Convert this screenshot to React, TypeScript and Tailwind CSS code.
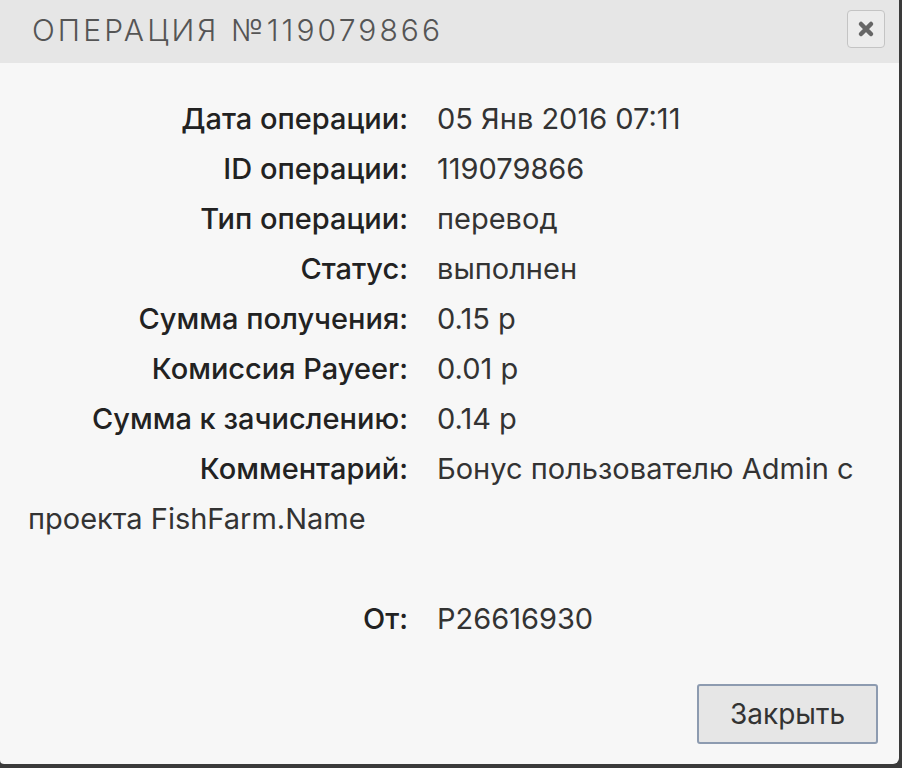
import React from "react";

const rows: [string, string][] = [
  ["Дата операции:", "05 Янв 2016 07:11"],
  ["ID операции:", "119079866"],
  ["Тип операции:", "перевод"],
  ["Статус:", "выполнен"],
  ["Сумма получения:", "0.15 р"],
  ["Комиссия Payeer:", "0.01 р"],
  ["Сумма к зачислению:", "0.14 р"],
];

export default function App() {
  return (
    <div className="w-[902px] h-[768px] bg-[#3a3a3a] overflow-hidden" style={{ fontFamily: "Inter, 'Open Sans', sans-serif" }}>
      <div className="w-[899px] h-[764px] bg-[#f7f7f7] rounded-br-[6px] rounded-bl-[4px] flex flex-col">
        <div className="h-[63px] bg-[#e6e6e6] flex items-center justify-between pl-[32px] pr-[14px]">
          <div className="text-[30px] font-light tracking-[3.1px] text-[#555] leading-none pb-[3px]">ОПЕРАЦИЯ №119079866</div>
          <button className="w-[38px] h-[38px] mt-[-6px] rounded-[4px] border border-[#c4c4c4] bg-[#ececec] flex items-center justify-center">
            <svg width="20" height="20" viewBox="0 0 20 20">
              <path d="M5 5 L15 15 M15 5 L5 15" stroke="#666" strokeWidth="4.5" strokeLinecap="round" />
            </svg>
          </button>
        </div>
        <div className="pl-[28px] pr-[36px] pt-[31px] text-[29px] leading-[50px] text-[#333] flex-1">
          {rows.map(([l, v]) => (
            <div key={l}>
              <span className="inline-block w-[380px] text-right font-medium text-[#222]">{l}</span>
              <span className="ml-[29px]">{v}</span>
            </div>
          ))}
          <div>
            <span className="inline-block w-[380px] text-right font-medium text-[#222]">Комментарий:</span>
            <span className="ml-[29px]">Бонус пользователю Admin с проекта FishFarm.Name</span>
          </div>
          <div className="h-[50px]" />
          <div>
            <span className="inline-block w-[380px] text-right font-medium text-[#222]">От:</span>
            <span className="ml-[29px]">P26616930</span>
          </div>
          <div className="flex justify-end mt-[40px]">
            <button className="w-[181px] h-[60px] mr-[-15px] border-2 border-[#8d9bb0] rounded-[3px] bg-[#e6e6e6] text-[28px] text-[#333]">Закрыть</button>
          </div>
        </div>
      </div>
    </div>
  );
}
